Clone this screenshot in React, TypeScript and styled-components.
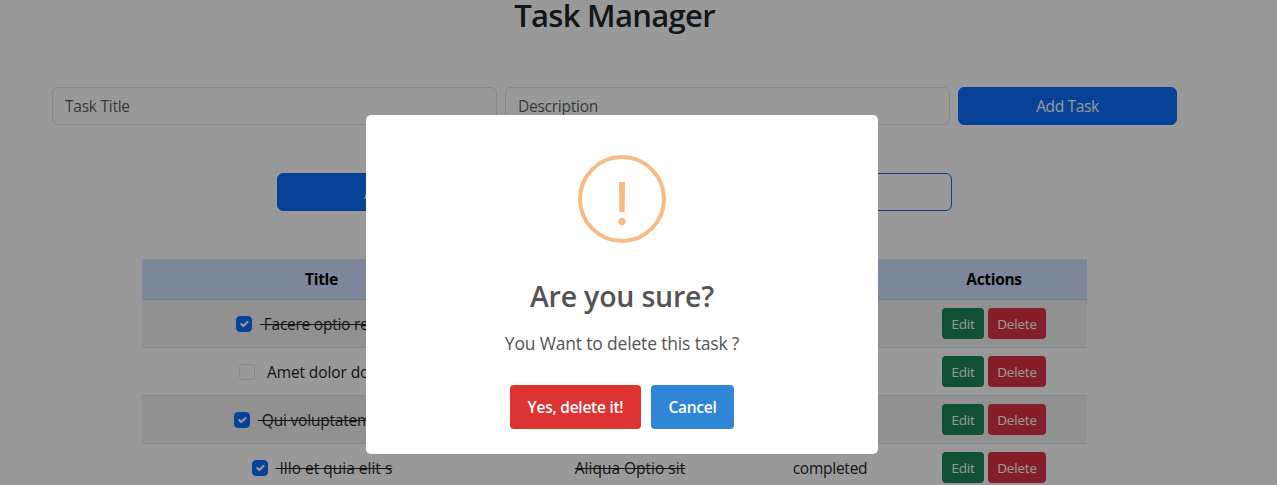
import React from "react";
import styled, { createGlobalStyle } from "styled-components";

const GlobalStyle = createGlobalStyle`
  *, *::before, *::after { box-sizing: border-box; }
  html, body { margin: 0; height: 485px; overflow: hidden; background: #fff; }
  body { font: 400 16px/24px "Open Sans", "Noto Sans", sans-serif; color: #212529; }
  button, input { font: inherit; margin: 0; }
`;

const Page = styled.main`
  width: 1229px;
  display: flex;
  flex-direction: column;
  align-items: center;
`;

const Heading = styled.h1`
  margin: 0;
  height: 35px;
  font-size: 31px;
  font-weight: 600;
  line-height: 31px;
  letter-spacing: -0.7px;
`;

const TaskForm = styled.form`
  margin-top: 52px;
  width: 1125px;
  display: grid;
  grid-template-columns: 445px 445px 219px;
  gap: 8px;
`;

const Field = styled.input`
  height: 38px;
  padding: 0 12px;
  border: 1px solid #dee2e6;
  border-radius: 6px;
  background: #fff;
  font-size: 15.5px;
  letter-spacing: -0.25px;
  &::placeholder { color: rgba(33, 37, 41, 0.75); opacity: 1; }
`;

const Button = styled.button<{ $outline?: boolean }>`
  height: 38px;
  padding: 0;
  border: 1px solid #0d6efd;
  border-radius: 6px;
  background: ${(p) => (p.$outline ? "#fff" : "#0d6efd")};
  color: ${(p) => (p.$outline ? "#0d6efd" : "#fff")};
  font-size: 15.5px;
  letter-spacing: -0.35px;
`;

const FilterButton = styled(Button)`
  padding: 1px 2px 0 0;
  letter-spacing: 0;
`;

const Filters = styled.div`
  margin-top: 48px;
  width: 675px;
  display: grid;
  grid-template-columns: 219px 220px 220px;
  gap: 8px;
`;

const Table = styled.table`
  margin-top: 48px;
  width: 945px;
  table-layout: fixed;
  border-collapse: separate;
  border-spacing: 0;
  text-align: center;
`;

const HeadCell = styled.th<{ $width: number }>`
  width: ${(p) => p.$width}px;
  height: 41px;
  padding: 0;
  background: #cfe2ff;
  border-bottom: 1px solid #bacbe6;
  color: #000;
  font-size: 15.5px;
  font-weight: 700;
  letter-spacing: -0.3px;
`;

const Row = styled.tr<{ $striped: boolean }>`
  background: ${(p) => (p.$striped ? "#f2f2f2" : "#fff")};
`;

const Cell = styled.td`
  height: 48px;
  padding: 0;
  border-bottom: 1px solid #dee2e6;
  font-size: 15.5px;
  letter-spacing: -0.25px;
`;

const TitleLine = styled.div`
  display: flex;
  align-items: center;
  justify-content: center;
  gap: 8px;
`;

const Check = styled.span<{ $on: boolean }>`
  width: 16px;
  height: 16px;
  flex: none;
  border: 1px solid ${(p) => (p.$on ? "#0d6efd" : "#dee2e6")};
  border-radius: 4px;
  background: ${(p) => (p.$on ? "#0d6efd" : "#fff")};
  svg { display: block; width: 14px; height: 14px; }
`;

const Label = styled.span<{ $struck: boolean; $width?: number; $tracking?: number }>`
  display: inline-block;
  vertical-align: top;
  width: ${(p) => (p.$width ? `${p.$width}px` : "auto")};
  white-space: pre;
  text-align: left;
  letter-spacing: ${(p) => p.$tracking ?? 0}px;
  text-decoration: ${(p) => (p.$struck ? "line-through" : "none")};
`;

const Actions = styled.div`
  display: flex;
  justify-content: center;
  gap: 4px;
`;

const SmallButton = styled.button<{ $color: string; $width: number }>`
  width: ${(p) => p.$width}px;
  height: 31px;
  padding: 0;
  border: 0;
  border-radius: 4px;
  background: ${(p) => p.$color};
  color: #fff;
  font-size: 13.5px;
  letter-spacing: -0.2px;
`;

const Overlay = styled.div`
  position: fixed;
  inset: 0;
  background: rgba(0, 0, 0, 0.4);
`;

const Dialog = styled.section`
  position: absolute;
  left: 366px;
  top: 115px;
  width: 512px;
  height: 339px;
  padding-top: 40px;
  border-radius: 5px;
  background: #fff;
  color: #545454;
  display: flex;
  flex-direction: column;
  align-items: center;
`;

const WarningIcon = styled.svg`
  width: 88px;
  height: 88px;
`;

const DialogTitle = styled.h2`
  margin: 34px 0 0;
  font-size: 28.5px;
  font-weight: 600;
  line-height: 38px;
  letter-spacing: -0.2px;
`;

const DialogText = styled.p`
  margin: 15px 0 0;
  font-size: 17.5px;
  line-height: 27px;
  letter-spacing: -0.17px;
`;

const DialogActions = styled.div`
  margin-top: 28px;
  display: flex;
  gap: 10px;
`;

const DialogButton = styled.button<{ $color: string; $width: number }>`
  width: ${(p) => p.$width}px;
  height: 44px;
  padding: 0;
  border: 0;
  border-radius: 4px;
  background: ${(p) => p.$color};
  color: #fff;
  font-size: 15.5px;
  font-weight: 600;
  letter-spacing: -0.25px;
`;

const tasks = [
  { title: "Facere optio repud", width: 147, tracking: -0.25, description: "Dolor sit", done: true },
  { title: "Amet dolor dolor", width: 141, tracking: -0.1, description: "Ut enim", done: false },
  { title: "Qui voluptatem vo", width: 151, tracking: -0.2, description: "Quia et", done: true },
  { title: "Illo et quia elit s", width: 116, tracking: 0, description: "Aliqua Optio sit", done: true },
];

export default function App() {
  return (
    <>
      <GlobalStyle />
      <Page>
        <Heading>Task Manager</Heading>
        <TaskForm>
          <Field placeholder="Task Title" />
          <Field placeholder="Description" />
          <Button type="button">Add Task</Button>
        </TaskForm>
        <Filters>
          <FilterButton>Active</FilterButton>
          <FilterButton $outline>Done</FilterButton>
          <FilterButton $outline>All</FilterButton>
        </Filters>
        <Table>
          <thead>
            <tr>
              <HeadCell $width={359}>Title</HeadCell>
              <HeadCell $width={258}>Description</HeadCell>
              <HeadCell $width={142}>Status</HeadCell>
              <HeadCell $width={186}>Actions</HeadCell>
            </tr>
          </thead>
          <tbody>
            {tasks.map((task, i) => (
              <Row key={task.title} $striped={i % 2 === 0}>
                <Cell>
                  <TitleLine>
                    <Check $on={task.done}>
                      {task.done && (
                        <svg viewBox="0 0 20 20">
                          <path
                            d="m6 10 3 3 6-6"
                            fill="none"
                            stroke="#fff"
                            strokeWidth="3"
                            strokeLinecap="round"
                            strokeLinejoin="round"
                          />
                        </svg>
                      )}
                    </Check>
                    <Label $struck={task.done} $width={task.width} $tracking={task.tracking}>
                      {` ${task.title}`}
                    </Label>
                  </TitleLine>
                </Cell>
                <Cell>
                  <Label $struck={task.done}>{task.description}</Label>
                </Cell>
                <Cell>{task.done ? "completed" : "pending"}</Cell>
                <Cell>
                  <Actions>
                    <SmallButton $color="#198754" $width={42}>Edit</SmallButton>
                    <SmallButton $color="#dc3545" $width={58}>Delete</SmallButton>
                  </Actions>
                </Cell>
              </Row>
            ))}
          </tbody>
        </Table>
      </Page>
      <Overlay>
        <Dialog role="dialog">
          <WarningIcon viewBox="0 0 88 88" fill="#f8bb86">
            <circle cx="44" cy="44" r="42" fill="none" stroke="#f8bb86" strokeWidth="4" />
            <path d="M41 27h6l-.3 30h-5.4z" />
            <circle cx="44" cy="66.5" r="3.7" />
          </WarningIcon>
          <DialogTitle>Are you sure?</DialogTitle>
          <DialogText>You Want to delete this task ?</DialogText>
          <DialogActions>
            <DialogButton $color="#dd3333" $width={131}>Yes, delete it!</DialogButton>
            <DialogButton $color="#3085d6" $width={83}>Cancel</DialogButton>
          </DialogActions>
        </Dialog>
      </Overlay>
    </>
  );
}
